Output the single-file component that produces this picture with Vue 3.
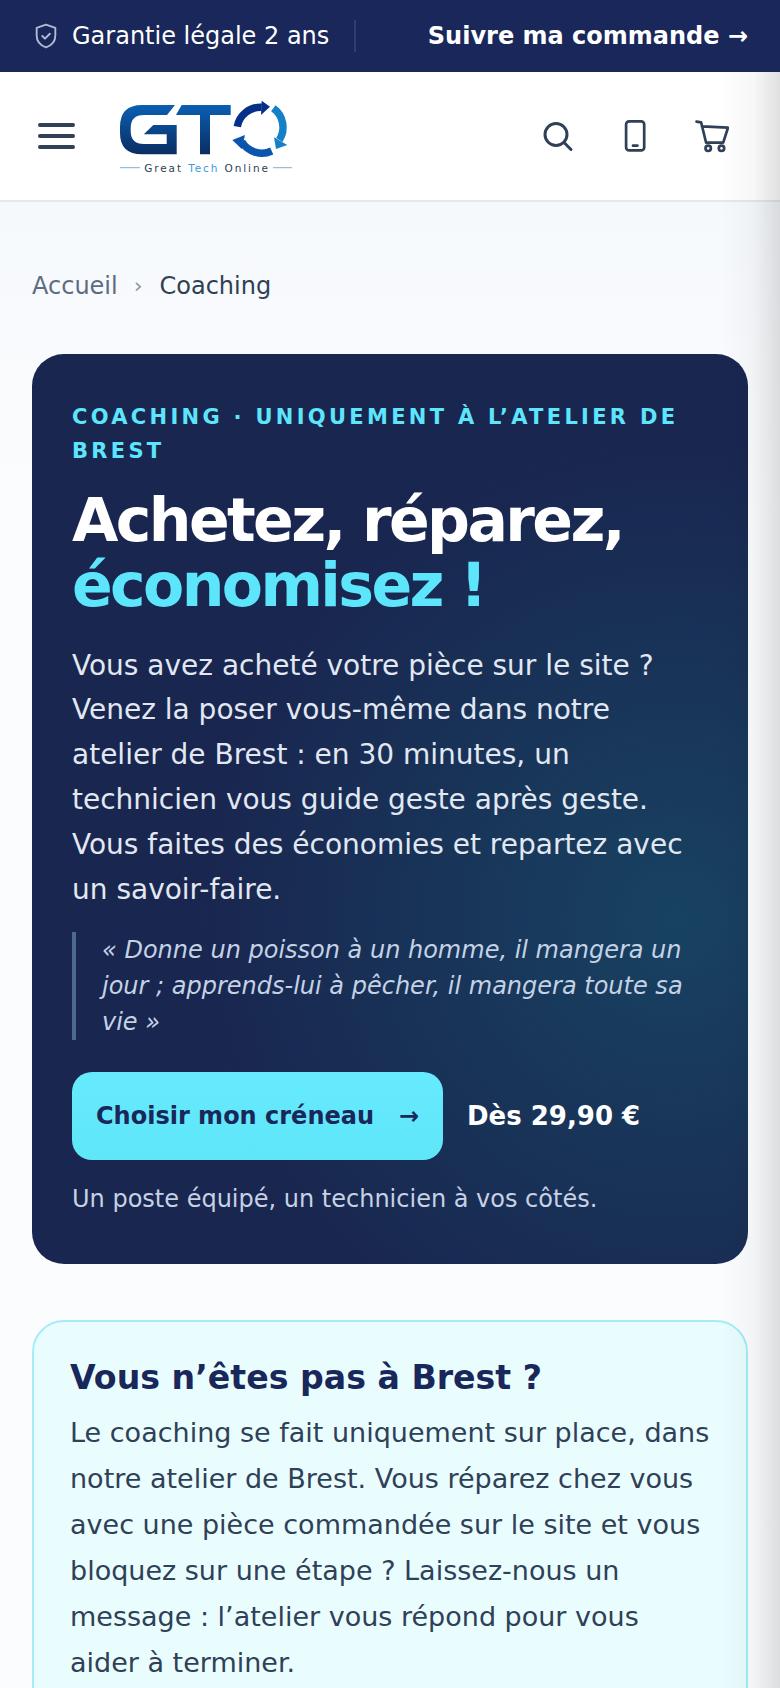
<script setup>
</script>

<template>
  <div class="page">
    <div class="topbar">
      <div class="guarantee">
        <svg class="shield" viewBox="0 0 24 24" fill="none" stroke="currentColor" stroke-width="1.6" stroke-linecap="round" stroke-linejoin="round">
          <path d="M12 2.300l8 2.700v6.500c0 5-3.400 8.600-8 10.200-4.600-1.600-8-5.200-8-10.200V5z" />
          <path d="M8.800 12l2.300 2.300 4.200-4.200" />
        </svg>
        <span>Garantie légale 2 ans</span>
      </div>
      <div class="sep"></div>
      <div class="track">Suivre ma commande →</div>
    </div>

    <header class="header">
      <div class="burger"><i></i><i></i><i></i></div>
      <svg class="logo" viewBox="0 -1 172 74">
        <defs>
          <linearGradient id="lg" x1="0" y1="0" x2="0" y2="1">
            <stop offset="0" stop-color="#0b5fb2" />
            <stop offset="1" stop-color="#0a2d62" />
          </linearGradient>
        </defs>
        <path fill="url(#lg)" d="M55 5H22Q0 5 0 27v6q0 21.300 22 21.300h34.700V25H33.300l-9.500 9.300h22.900V44H24Q10.700 44 10.700 31v-3Q10.700 15 24 15h23z" />
        <path fill="url(#lg)" d="M61.700 5h49v10H90v39.300H80V15H56z" />
        <path fill="none" stroke="#04308a" stroke-width="7.500" d="M117.300 26.700A23.500 23.500 0 0 1 141.700 7.300" />
        <path fill="#04308a" d="M141.700.7L150 6.700 141 15z" />
        <path fill="none" stroke="#1580c8" stroke-width="7.500" d="M153.300 8.300A23.500 23.500 0 0 1 159.300 40" />
        <path fill="#1580c8" d="M154 37.300L167.300 45 156 49z" />
        <path fill="none" stroke="#0a55ae" stroke-width="7.500" d="M151.700 51A23.500 23.500 0 0 1 121.700 41.700" />
        <path fill="#0a55ae" d="M112.300 40L125 35l-3.300 14z" />
        <path stroke="#7fb0cc" stroke-width="1" d="M0 67.700h20M153 67.700h19" />
        <text x="87" y="71.500" text-anchor="middle" class="logotext">Great <tspan fill="#3a9bd8">Tech</tspan> Online</text>
      </svg>
      <div class="icons">
        <svg viewBox="0 0 34 34" fill="none" stroke="currentColor" stroke-width="3" stroke-linecap="round">
          <circle cx="15" cy="15.500" r="11" /><path d="M23 23.500l7 7" />
        </svg>
        <svg viewBox="0 0 34 34" fill="none" stroke="currentColor" stroke-width="2.700" stroke-linecap="round">
          <rect x="8.100" y="2.300" width="18.100" height="29.100" rx="3" /><path d="M15 26.700h4.400" />
        </svg>
        <svg viewBox="0 0 34 34" fill="none" stroke="currentColor" stroke-width="2.700" stroke-linecap="round" stroke-linejoin="round">
          <path d="M1.500 2.700l4.600.6 5 20.400h17.100L33 8.700 6.900 7.400" />
          <circle cx="13.200" cy="29.300" r="2.700" /><circle cx="26.500" cy="29.300" r="2.700" />
        </svg>
      </div>
    </header>

    <main class="main">
      <nav class="crumbs"><span class="c1">Accueil</span><span class="chev">›</span><span class="c2">Coaching</span></nav>

      <section class="hero">
        <p class="eyebrow">COACHING · UNIQUEMENT À L’ATELIER DE BREST</p>
        <h1>Achetez, réparez, <span>économisez !</span></h1>
        <p class="lead">Vous avez acheté votre pièce sur le site ? Venez la poser vous-même dans notre atelier de Brest : en 30 minutes, un technicien vous guide geste après geste. Vous faites des économies et repartez avec un savoir-faire.</p>
        <blockquote>« Donne un poisson à un homme, il mangera un jour ; apprends-lui à pêcher, il mangera toute sa vie »</blockquote>
        <div class="cta">
          <div class="btn"><span>Choisir mon créneau</span><span>→</span></div>
          <div class="price">Dès 29,90 €</div>
        </div>
        <p class="note">Un poste équipé, un technicien à vos côtés.</p>
      </section>

      <section class="away">
        <h2>Vous n’êtes pas à Brest ?</h2>
        <p>Le coaching se fait uniquement sur place, dans notre atelier de Brest. Vous réparez chez vous avec une pièce commandée sur le site et vous bloquez sur une étape ? Laissez-nous un message : l’atelier vous répond pour vous aider à terminer.</p>
      </section>
    </main>
    <div class="edge"></div>
  </div>
</template>

<style>
html, body { margin: 0; background: #f9fbfd; }
</style>

<style scoped>
.page {
  position: relative;
  width: 780px;
  height: 1688px;
  overflow: hidden;
  background: linear-gradient(#f6f9fc 200px, #fbfcfe 520px);
  font-family: "DejaVu Sans", sans-serif;
}
.topbar {
  height: 72px;
  background: #19275a;
  color: #fff;
  display: flex;
  align-items: center;
  padding: 0 32px;
  box-sizing: border-box;
}
.guarantee { display: flex; align-items: center; gap: 12px; font-size: 24px; }
.shield { width: 28px; height: 28px; color: #b3bdd0; flex: none; }
.sep { width: 2px; height: 32px; background: #2f3d70; margin-left: 25px; }
.track { margin-left: auto; font-size: 24px; font-weight: 700; }
.header {
  height: 130px;
  box-sizing: border-box;
  background: #fff;
  border-bottom: 2px solid #e2e9f0;
  display: flex;
  align-items: center;
  padding: 0 51.500px 0 38px;
}
.burger { width: 37px; display: flex; flex-direction: column; gap: 7px; }
.burger i { display: block; height: 4px; border-radius: 2px; background: #2f4057; }
.logo { width: 172px; height: 74px; margin-left: 45px; }
.logotext { font-size: 10.500px; letter-spacing: 1.900px; fill: #2f3f55; font-family: "DejaVu Sans", sans-serif; }
.icons { margin-left: auto; display: flex; align-items: center; gap: 43px; color: #2f4057; }
.icons svg { width: 34px; height: 34px; }
.main { padding: 65px 32px 0; }
.crumbs { display: flex; align-items: center; font-size: 24px; line-height: 38px; }
.c1 { color: #5d6c80; }
.chev { color: #8a97a8; margin: 0 17px 0 16px; font-size: 22px; }
.c2 { color: #2f3f55; }
.hero {
  margin-top: 49px;
  padding: 46px 40px;
  border-radius: 32px;
  color: #fff;
  background: radial-gradient(circle 480px at 90% 62%, rgba(21, 142, 144, .27) 0, rgba(21, 142, 144, 0) 100%), #192650;
}
.eyebrow {
  margin: 0;
  font-size: 21px;
  line-height: 34px;
  font-weight: 700;
  letter-spacing: 3.300px;
  color: #5de6fb;
}
h1 {
  margin: 20px 0 0;
  font-size: 60px;
  line-height: 64.800px;
  font-weight: 700;
  letter-spacing: -2.600px;
}
h1 span { display: block; color: #5de6fb; }
.lead {
  margin: 26px 0 0;
  font-size: 28px;
  line-height: 44.800px;
  color: #e2e8f2;
}
blockquote {
  margin: 20px 0 0;
  padding: 0 0 0 26px;
  border-left: 4px solid #4d6a8c;
  font-size: 24px;
  line-height: 36px;
  font-style: italic;
  color: #c4d2e6;
}
.cta { margin-top: 32px; display: flex; align-items: center; gap: 24px; }
.btn {
  width: 371px;
  height: 88px;
  box-sizing: border-box;
  padding: 0 24px;
  border-radius: 20px;
  background: linear-gradient(#67eafd, #5fe6f9);
  color: #19275a;
  display: flex;
  align-items: center;
  justify-content: space-between;
  font-size: 24px;
  font-weight: 700;
}
.price { font-size: 26px; font-weight: 700; }
.note { margin: 20px 0 0; font-size: 24px; line-height: 38px; color: #c6d2e4; }
.away {
  margin-top: 56px;
  padding: 34px 36px;
  border: 2px solid #a6ecf6;
  border-radius: 32px;
  background: #e9fdfe;
}
h2 { margin: 0; font-size: 33.200px; line-height: 44px; font-weight: 700; color: #19275a; }
.away p { margin: 10px 0 0; font-size: 27px; line-height: 46px; color: #2f4057; }
.edge {
  position: absolute;
  top: 72px;
  right: 0;
  bottom: 0;
  width: 60px;
  background: linear-gradient(to right, rgba(0,0,0,0), rgba(0,0,0,.03) 55%, rgba(0,0,0,.12));
  pointer-events: none;
}
</style>
